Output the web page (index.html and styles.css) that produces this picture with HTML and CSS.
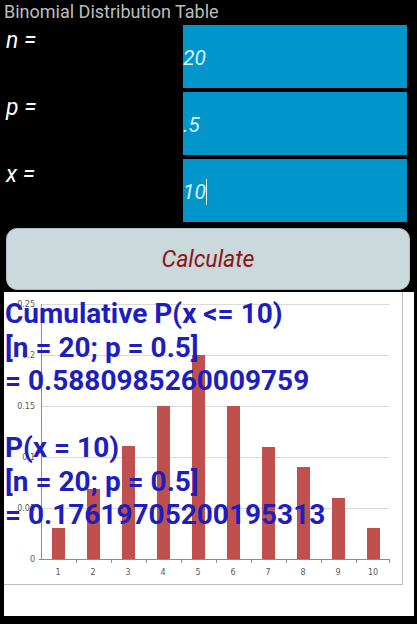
FILE: index.html
```html
<!DOCTYPE html>
<html lang="en">
<head>
    <meta charset="UTF-8">
    <meta name="viewport" content="width=device-width, initial-scale=1.0">
    <link rel="stylesheet" href="styles.css">
</head>
<body>

    <div class="title">Binomial Distribution Table</div>

    <!-- Inputs -->
    <div class="form">
        <label class="label" for="n">n =</label>
        <div class="field"><span class="value" id="n">20</span></div>

        <label class="label" for="p">p =</label>
        <div class="field"><span class="value" id="p">.5</span></div>

        <label class="label" for="x">x =</label>
        <div class="field"><span class="value" id="x">10</span><span class="cursor"></span></div>
    </div>

    <button class="calc">Calculate</button>

    <!-- Result over the chart picture -->
    <div class="result">
        <svg class="chart" width="410" height="324" viewBox="0 0 410 324">
            <rect x="0" y="0" width="410" height="324" fill="#fff"/>
            <g stroke="#d9d9d9" stroke-width="1">
                <line x1="37" y1="12.5" x2="385" y2="12.5"/>
                <line x1="37" y1="63.5" x2="385" y2="63.5"/>
                <line x1="37" y1="114.5" x2="385" y2="114.5"/>
                <line x1="37" y1="165.5" x2="385" y2="165.5"/>
                <line x1="37" y1="216.5" x2="385" y2="216.5"/>
            </g>
            <g fill="#c0504d">
                <rect x="48" y="236" width="13" height="31"/>
                <rect x="83" y="197" width="13" height="70"/>
                <rect x="118" y="154" width="13" height="113"/>
                <rect x="153" y="114" width="13" height="153"/>
                <rect x="188" y="63" width="13" height="204"/>
                <rect x="223" y="114" width="13" height="153"/>
                <rect x="258" y="155" width="13" height="112"/>
                <rect x="293" y="175" width="13" height="92"/>
                <rect x="328" y="206" width="13" height="61"/>
                <rect x="363" y="236" width="13" height="31"/>
            </g>
            <g stroke="#8c8c8c" stroke-width="1">
                <line x1="37.5" y1="12" x2="37.5" y2="267"/>
                <line x1="35" y1="267.5" x2="385" y2="267.5"/>
                <line x1="72.5" y1="267" x2="72.5" y2="271"/>
                <line x1="107.5" y1="267" x2="107.5" y2="271"/>
                <line x1="142.5" y1="267" x2="142.5" y2="271"/>
                <line x1="177.5" y1="267" x2="177.5" y2="271"/>
                <line x1="212.5" y1="267" x2="212.5" y2="271"/>
                <line x1="247.5" y1="267" x2="247.5" y2="271"/>
                <line x1="282.5" y1="267" x2="282.5" y2="271"/>
                <line x1="317.5" y1="267" x2="317.5" y2="271"/>
                <line x1="352.5" y1="267" x2="352.5" y2="271"/>
                <line x1="385.5" y1="267" x2="385.5" y2="271"/>
            </g>
            <g class="axis" text-anchor="end">
                <text x="31" y="15">0.25</text>
                <text x="31" y="66">0.2</text>
                <text x="31" y="117">0.15</text>
                <text x="31" y="168">0.1</text>
                <text x="31" y="219">0.05</text>
                <text x="31" y="270">0</text>
            </g>
            <g class="axis" text-anchor="middle">
                <text x="54" y="283">1</text>
                <text x="89" y="283">2</text>
                <text x="124" y="283">3</text>
                <text x="159" y="283">4</text>
                <text x="194" y="283">5</text>
                <text x="229" y="283">6</text>
                <text x="264" y="283">7</text>
                <text x="299" y="283">8</text>
                <text x="334" y="283">9</text>
                <text x="369" y="283">10</text>
            </g>
            <g stroke="#bfbfbf" stroke-width="1" fill="none">
                <line x1="398.5" y1="0" x2="398.5" y2="292"/>
                <line x1="0" y1="292.5" x2="399" y2="292.5"/>
            </g>
        </svg>
        <div class="answer">
            Cumulative P(x &lt;= 10)<br>
            [n = 20; p = 0.5]<br>
            = 0.5880985260009759<br>
            <br>
            P(x = 10)<br>
            [n = 20; p = 0.5]<br>
            = 0.17619705200195313
        </div>
    </div>

</body>
</html>
```

FILE: styles.css
```css
body {
    margin: 0;
    padding: 0;
    width: 417px;
    height: 624px;
    background: #000;
    font-family: Roboto, 'Liberation Sans', sans-serif;
    overflow: hidden;
}

.title {
    color: #bdbdbd;
    font-size: 18px;
    line-height: 20px;
    padding: 2px 0 0 4px;
    height: 22px;
    box-sizing: border-box;
}

.form {
    display: grid;
    grid-template-columns: 183px 224px;
    grid-auto-rows: 63px;
    row-gap: 4px;
    margin-top: 3px;
}

.label {
    color: #fff;
    font-style: italic;
    font-size: 23px;
    line-height: 28px;
    padding: 2px 0 0 6px;
}

.field {
    background: #0096cb;
    display: flex;
    align-items: center;
}

.value {
    color: #d6f3ff;
    font-style: italic;
    font-size: 21px;
    padding-top: 3px;
}

.cursor {
    width: 1px;
    height: 26px;
    background: #e8f8ff;
    margin-top: 2px;
}

.calc {
    display: block;
    width: 404px;
    height: 62px;
    margin: 6px 0 0 6px;
    background: #c9d9dc;
    border: 1px solid #aebfc3;
    border-radius: 11px;
    color: #7c1b22;
    font-family: Roboto, 'Liberation Sans', sans-serif;
    font-style: italic;
    font-size: 23px;
    text-shadow: 0 0 2px #f2b7b7;
    padding: 0;
}

.result {
    position: relative;
    width: 410px;
    height: 324px;
    margin: 2px 0 0 4px;
}

.chart {
    display: block;
}

.axis {
    font-family: 'DejaVu Sans', sans-serif;
    font-size: 8px;
    fill: #595959;
}

.answer {
    position: absolute;
    top: 5px;
    left: 1px;
    color: #1e1ebe;
    font-weight: bold;
    font-size: 28px;
    line-height: 33.5px;
    white-space: nowrap;
}
```
